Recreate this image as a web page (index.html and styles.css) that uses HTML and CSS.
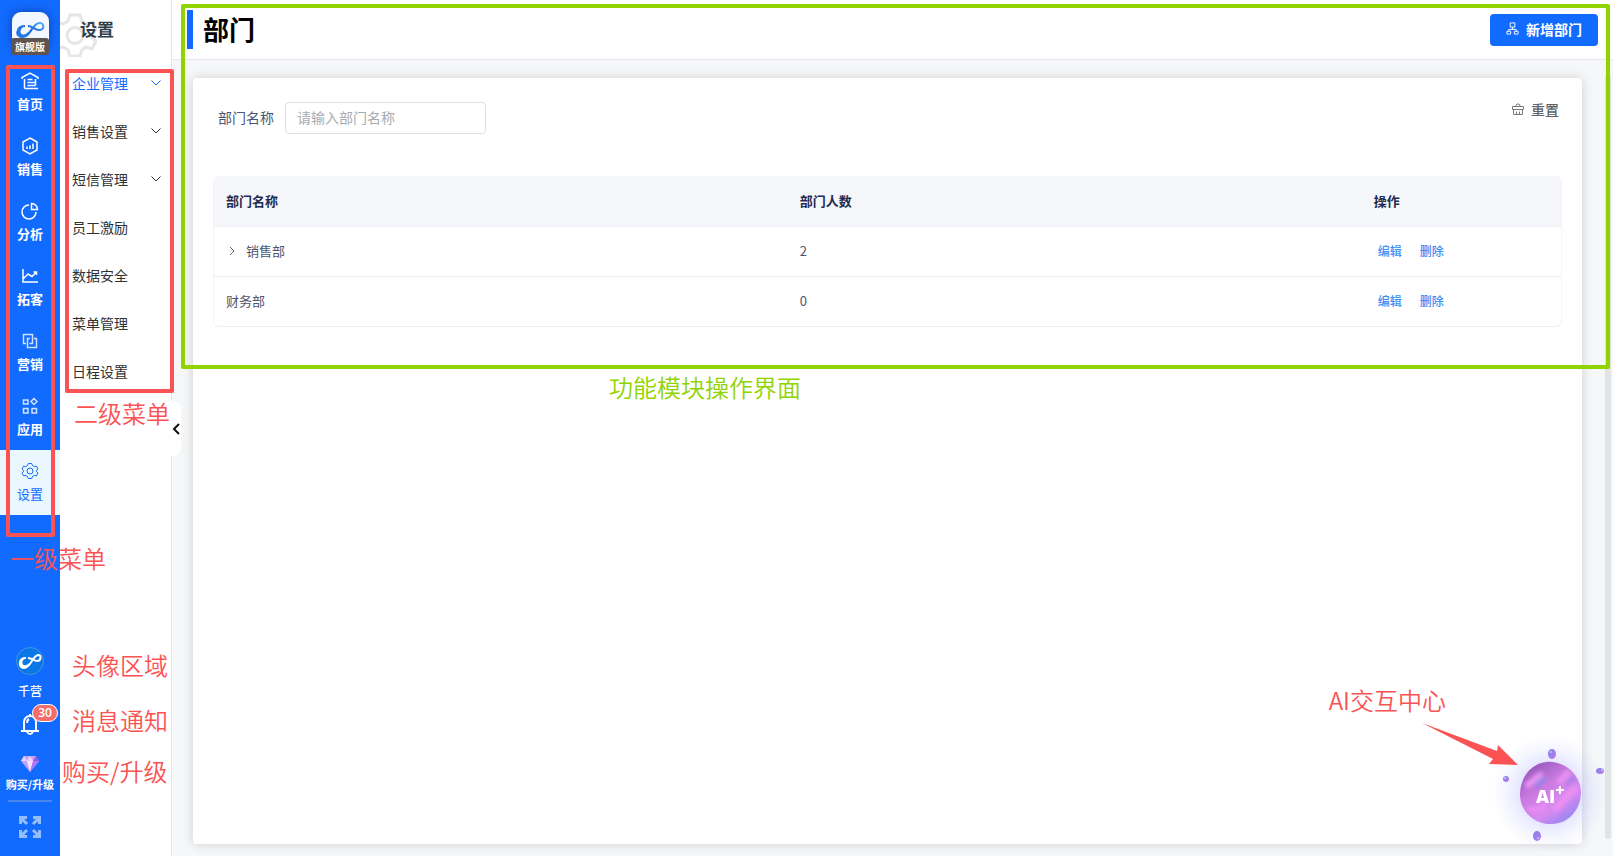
FILE: index.html
```html
<!DOCTYPE html>
<html lang="zh-CN">
<head>
    <meta charset="UTF-8">
    <meta name="viewport" content="width=device-width, initial-scale=1.0">
    <title>部门</title>
    <link rel="stylesheet" href="styles.css">
</head>
<body>

<div class="app">
    <!-- First level menu -->
    <aside class="sidebar">
        <div class="logo">
            <svg class="logo-mark" viewBox="0 0 37 37" width="37" height="37">
                <defs>
                    <linearGradient id="logoBlue" x1="0" y1="1" x2="1" y2="0">
                        <stop offset="0" stop-color="#3b9cf5"/>
                        <stop offset="0.5" stop-color="#1660d8"/>
                        <stop offset="1" stop-color="#5fb4fa"/>
                    </linearGradient>
                </defs>
                <path d="M13 14C4 14 3 25 10 25C18 26 20 12 27 11C32 10 33 17 28 18C23 19 21 14 16 14" fill="none" stroke="url(#logoBlue)" stroke-width="2"/>
                <path d="M12 14C4 16 3 24 8 25C13 26 16 22 18 19C14 23 11 24 9 22C7 20 8 16 12 14Z" fill="#2478e6" stroke="#2478e6"/>
            </svg>
            <span class="edition">旗舰版</span>
        </div>
        <nav class="main-nav">
            <a class="nav-item" href="#">
                <svg viewBox="0 0 18 18" width="18" height="18"><path d="M1 7V5.500L9 1L17 5.500V7M3.500 7V16.500M14.500 7V13.500M3.500 16.500H17M6.500 7.500H11.500M6.500 10.500H14M6.500 13.500H14.500"/></svg>
                首页
            </a>
            <a class="nav-item" href="#">
                <svg viewBox="0 0 18 18" width="18" height="18"><path d="M9 1L16 5V13L9 17L2 13V5ZM6 9.500V12M9 8.500V12M12 6.500V12"/></svg>
                销售
            </a>
            <a class="nav-item" href="#">
                <svg viewBox="0 0 18 18" width="18" height="18"><path d="M8 3A7 7 0 1 0 15 10M10.500 1.500V7.500H16.500A6 6 0 0 0 10.500 1.500Z"/></svg>
                分析
            </a>
            <a class="nav-item" href="#">
                <svg viewBox="0 0 18 18" width="18" height="18"><path d="M2 2V15H17M2 12L7 7L11 9.500L15 5.500M12.500 5H15.500V8"/></svg>
                拓客
            </a>
            <a class="nav-item soft" href="#">
                <svg viewBox="0 0 18 18" width="18" height="18"><path d="M5 11.500H2.500V2.500H11.500V11.500H8.500M13 6.500H15.500V15.500H6.500V6.500H9"/></svg>
                营销
            </a>
            <a class="nav-item soft" href="#">
                <svg viewBox="0 0 18 18" width="18" height="18"><path d="M2.500 3H7V7H2.500ZM2.500 11.500H7V16H2.500ZM11 11.500H15.500V16H11ZM13 1.500L16 4.500L13 7.500L10 4.500Z"/></svg>
                应用
            </a>
            <a class="nav-item active" href="#">
                <svg viewBox="0 0 18 18" width="18" height="18"><path d="M7.300 1.500H10.700L11.500 3.600L13.500 4.600L15.400 4.100L17 7L15.600 8.300V9.700L17 11L15.400 13.900L13.500 13.400L11.500 14.400L10.700 16.500H7.300L6.500 14.400L4.500 13.400L2.600 13.900L1 11L2.400 9.700V8.300L1 7L2.600 4.100L4.500 4.600L6.500 3.600Z"/><circle cx="9" cy="9" r="3"/></svg>
                设置
            </a>
        </nav>
        <div class="user-area">
            <a class="user" href="#">
                <svg viewBox="0 0 28 28" width="28" height="28">
                    <circle cx="14" cy="14" r="13.500" fill="#0877e8" stroke="#4b93d9"/>
                    <path d="M10 11C2 11 2 21 8 21C15 21 16 9 22 8C26 8 25 14 21 14C18 14 16 11 12 11" fill="none" stroke="#fff" stroke-width="2"/>
                    <path d="M9 11C2 13 2 21 8 21C11 21 13 18 14 16C11 19 8 19 7 18C5 16 6 13 9 11Z" fill="#fff" stroke="#fff"/>
                </svg>
                千营
            </a>
            <button class="bell" aria-label="消息通知">
                <svg viewBox="0 0 20 22" width="20" height="22"><path d="M4 18V9A6 6 0 0 1 16 9V18M1 18H19M7 19Q10 23 13 19M10 3V1M7 10Q7 7 9 6" fill="none" stroke="#fff" stroke-width="2"/></svg>
                <span class="badge">30</span>
            </button>
            <a class="upgrade" href="#">
                <svg viewBox="0 0 20 18" width="20" height="18">
                    <path d="M4 1H16L19 6L10 17L1 6Z" fill="#c5a2fb"/>
                    <path d="M4 1L7 6H1ZM10 1L13 6H7Z" fill="#e9d4ff"/>
                    <path d="M16 1L13 6H19Z" fill="#8f54e9"/>
                    <path d="M7 6H13L10 17Z" fill="#f4e3ff"/>
                    <path d="M13 6H19L10 17Z" fill="#b276f4"/>
                </svg>
                购买/升级
            </a>
            <button class="fullscreen" aria-label="全屏">
                <svg viewBox="0 0 22 22" width="22" height="22"><path d="M1.500 8V1.500H8M2 2L8 8M14 1.500H20.500V8M20 2L14 8M1.500 14V20.500H8M2 20L8 14M20.500 14V20.500H14M20 20L14 14" fill="none" stroke="#95bdfc" stroke-width="3"/></svg>
            </button>
        </div>
    </aside>

    <!-- Second level menu -->
    <aside class="submenu">
        <div class="submenu-title">
            <svg class="submenu-gear" viewBox="0 0 44 44" width="44" height="44"><path d="M17 2H27L29 8L34 11L40 9L43 17L38 21V24L43 28L39 36L33 34L29 37L27 43H17L15 37L10 34L4 36L0 28L5 24V21L0 17L4 9L10 11L15 8Z"/><circle cx="22" cy="22.500" r="8"/></svg>
            <span>设置</span>
        </div>
        <nav class="sub-nav">
            <a class="sub-item current" href="#">企业管理 <svg viewBox="0 0 10 6" width="10" height="6"><path d="M0.500 0.500L5 5L9.500 0.500"/></svg></a>
            <a class="sub-item" href="#">销售设置 <svg viewBox="0 0 10 6" width="10" height="6"><path d="M0.500 0.500L5 5L9.500 0.500"/></svg></a>
            <a class="sub-item" href="#">短信管理 <svg viewBox="0 0 10 6" width="10" height="6"><path d="M0.500 0.500L5 5L9.500 0.500"/></svg></a>
            <a class="sub-item" href="#">员工激励</a>
            <a class="sub-item" href="#">数据安全</a>
            <a class="sub-item" href="#">菜单管理</a>
            <a class="sub-item" href="#">日程设置</a>
        </nav>
        <button class="collapse" aria-label="收起">
            <svg viewBox="0 0 8 12" width="8" height="12"><path d="M7 1L2 6L7 11" fill="none" stroke="#111" stroke-width="2"/></svg>
        </button>
    </aside>

    <main class="main">
        <header class="page-header">
            <h1>部门</h1>
            <button class="add-btn">
                <svg viewBox="0 0 14 14" width="13" height="13"><path d="M4.500 1H9.500V5.500H4.500ZM7 5.500V8M3 10V8H11V10M1 10H5V13H1ZM9 10H13V13H9Z" fill="none" stroke="#fff"/></svg>
                新增部门
            </button>
        </header>
        <div class="content">
            <section class="card">
                <form class="filter">
                    <label for="deptName">部门名称</label>
                    <input type="text" id="deptName" placeholder="请输入部门名称">
                    <button type="reset" class="reset-btn">
                        <svg viewBox="0 0 14 14" width="14" height="14"><path d="M5 4.500V3Q7 0.500 9 3V4.500M1.500 4.500H12.500V7.500H1.500ZM2.500 7.500V12.500H11.500V7.500M5.500 9.500V12.500M8.500 9.500V12.500" fill="none" stroke="#777"/></svg>
                        重置
                    </button>
                </form>
                <div class="table-wrap">
                    <table>
                        <thead>
                            <tr>
                                <th class="col-name">部门名称</th>
                                <th class="col-count">部门人数</th>
                                <th>操作</th>
                            </tr>
                        </thead>
                        <tbody>
                            <tr>
                                <td><button class="expand" aria-label="展开"><svg viewBox="0 0 6 10" width="6" height="10"><path d="M1 1L5 5L1 9" fill="none" stroke="#606266"/></svg></button>销售部</td>
                                <td>2</td>
                                <td><a class="op" href="#">编辑</a><a class="op" href="#">删除</a></td>
                            </tr>
                            <tr>
                                <td>财务部</td>
                                <td>0</td>
                                <td><a class="op" href="#">编辑</a><a class="op" href="#">删除</a></td>
                            </tr>
                        </tbody>
                    </table>
                </div>
            </section>
        </div>
        <div class="scrollbar"></div>
    </main>
</div>

<button class="ai-orb" aria-label="AI交互中心">
    <svg viewBox="0 0 120 120" width="120" height="120">
        <defs>
            <linearGradient id="orb" x1="0.200" y1="0" x2="0.900" y2="1">
                <stop offset="0" stop-color="#9157b8"/>
                <stop offset="0.350" stop-color="#ca79df"/>
                <stop offset="0.650" stop-color="#d88af0"/>
                <stop offset="1" stop-color="#8584f2"/>
            </linearGradient>
            <radialGradient id="halo">
                <stop offset="0.400" stop-color="#a5a8ff" stop-opacity="0.400"/>
                <stop offset="1" stop-color="#c9d2ff" stop-opacity="0"/>
            </radialGradient>
            <linearGradient id="dot" x1="0" y1="0" x2="1" y2="1">
                <stop offset="0" stop-color="#7d84ee"/>
                <stop offset="1" stop-color="#c07be8"/>
            </linearGradient>
            <filter id="soft"><feGaussianBlur stdDeviation="2"/></filter>
            <clipPath id="orbClip"><circle cx="60" cy="60" r="30"/></clipPath>
        </defs>
        <circle cx="60" cy="60" r="58" fill="url(#halo)"/>
        <path d="M56 29C74 27 91 42 91 59C91 77 78 91 62 91C45 92 31 79 30 63C30 45 40 31 56 29Z" fill="url(#orb)"/>
        <g clip-path="url(#orbClip)" filter="url(#soft)" stroke-linecap="round">
            <path d="M38 52L50 42" stroke="#f097f6" stroke-width="6"/>
            <path d="M47 52L53 46" stroke="#9586e8" stroke-width="6"/>
            <path d="M66 76L84 56" stroke="#f08ff3" stroke-width="6"/>
            <path d="M70 48L78 40" stroke="#e995f4" stroke-width="6"/>
            <path d="M40 76Q48 80 54 72" fill="none" stroke="#e88df4" stroke-width="6"/>
            <path d="M78 50L86 43" stroke="#9e82ec" stroke-width="4"/>
        </g>
        <g fill="url(#dot)">
            <ellipse cx="62" cy="21" rx="4" ry="5"/>
            <ellipse cx="16" cy="46" rx="3" ry="3"/>
            <ellipse cx="110" cy="38" rx="4" ry="3"/>
            <ellipse cx="47" cy="103" rx="4" ry="5"/>
        </g>
        <g fill="#c9c6ff"><circle cx="61" cy="19" r="1"/><circle cx="15" cy="45" r="1"/><circle cx="112" cy="37" r="1"/><circle cx="48" cy="105" r="1"/></g>
    </svg>
    <span class="ai-text">AI<sup>+</sup></span>
</button>

<!-- Guide marks drawn over the interface -->
<div class="mark mark-first"></div>
<div class="mark mark-second"></div>
<div class="mark mark-module"></div>
<span class="note note-first">一级菜单</span>
<span class="note note-second">二级菜单</span>
<span class="note note-avatar">头像区域</span>
<span class="note note-message">消息通知</span>
<span class="note note-upgrade">购买/升级</span>
<span class="note note-module">功能模块操作界面</span>
<span class="note note-ai">AI交互中心</span>
<svg class="arrow" viewBox="0 0 96 44" width="96" height="44"><path d="M0 0L75 28L76 22L96 42L67 41L71 36Z" fill="#fb5353"/></svg>

</body>
</html>
```

FILE: styles.css
```css
* {
    box-sizing: border-box;
}
body {
    margin: 0;
    font-family: "Noto Sans CJK SC", sans-serif;
    font-size: 14px;
    color: #303133;
    background-color: #f5f7f9;
    overflow: hidden;
}
a {
    text-decoration: none;
    color: inherit;
}
button {
    border: none;
    background: none;
    padding: 0;
    font-family: inherit;
    cursor: pointer;
}
svg {
    display: block;
    flex-shrink: 0;
}
.app {
    display: flex;
    height: 100vh;
}

/* First level menu */
.sidebar {
    width: 60px;
    flex-shrink: 0;
    display: flex;
    flex-direction: column;
    background-color: #126bff;
    color: #fff;
}
.logo {
    position: relative;
    height: 60px;
    padding: 12px 12px 0;
}
.logo-mark {
    border-radius: 9px;
    background-color: #f3f7ff;
    box-shadow: 0 0 10px rgba(0, 30, 100, 0.5);
}
.edition {
    position: absolute;
    left: 11px;
    top: 38px;
    width: 38px;
    border-radius: 3px;
    background-color: #5d5350;
    font-size: 10px;
    font-weight: bold;
    line-height: 17px;
    text-align: center;
}
.nav-item {
    display: flex;
    flex-direction: column;
    align-items: center;
    gap: 4px;
    height: 65px;
    padding-top: 12px;
    font-size: 13px;
    font-weight: bold;
    line-height: 20px;
}
.nav-item svg,
.submenu-gear,
.sub-item svg {
    fill: none;
    stroke: currentColor;
}
.nav-item svg {
    stroke-width: 1.5;
}
.nav-item.active {
    background-color: #eaf7ff;
    color: #126bff;
    font-weight: normal;
}
.nav-item.active svg {
    stroke-width: 1;
}
.nav-item.soft svg {
    opacity: 0.8;
}
.user-area {
    display: flex;
    flex-direction: column;
    align-items: center;
    margin-top: auto;
    padding-bottom: 18px;
    font-size: 12px;
}
.user,
.upgrade {
    display: flex;
    flex-direction: column;
    align-items: center;
    line-height: 18px;
}
.user {
    gap: 7px;
    font-weight: 500;
}
.bell {
    position: relative;
    margin-top: 13px;
}
.badge {
    position: absolute;
    left: 12px;
    top: -9px;
    width: 26px;
    border: 1px solid #fff;
    border-radius: 9px;
    background-color: #f56c6c;
    color: #fff;
    font-family: "Open Sans", sans-serif;
    font-size: 12px;
    font-weight: 600;
    line-height: 16px;
}
.upgrade {
    gap: 2px;
    margin-top: 20px;
    font-size: 11px;
    font-weight: bold;
    white-space: nowrap;
}
.fullscreen {
    margin-top: 7px;
    padding: 14px 11px 0;
    border-top: 2px solid #4a86ea;
}

/* Second level menu */
.submenu {
    position: relative;
    width: 112px;
    flex-shrink: 0;
    border-right: 1px solid #e1e4ec;
    background-color: #fff;
}
.submenu-title {
    display: flex;
    align-items: center;
    height: 60px;
    padding: 0 0 4px 20px;
    overflow: hidden;
    position: relative;
    color: #303e4c;
    font-size: 17px;
    font-weight: bold;
}
.submenu-title span {
    position: relative;
}
.submenu-gear {
    position: absolute;
    left: -7px;
    top: 13px;
    color: #e6e6e6;
    stroke-width: 3;
}
.sub-item {
    display: flex;
    align-items: center;
    justify-content: space-between;
    height: 48px;
    padding: 0 10px 2px 12px;
}
.sub-item.current {
    color: #126bff;
}
.collapse {
    position: absolute;
    z-index: 1;
    right: -10px;
    top: 401px;
    width: 11px;
    height: 55px;
    padding-left: 2px;
    border-radius: 0 8px 8px 0;
    background-color: #fff;
}

/* Page */
.main {
    position: relative;
    flex: 1;
    min-width: 0;
    display: flex;
    flex-direction: column;
}
.page-header {
    display: flex;
    align-items: center;
    justify-content: space-between;
    height: 60px;
    padding: 0 15px;
    border-bottom: 1px solid #e4e7ed;
    background-color: #fff;
}
h1 {
    margin: 0;
    padding: 0 0 2px 10px;
    border-left: 6px solid #126bff;
    color: #000;
    font-size: 26px;
    font-weight: bold;
    line-height: 37px;
}
.add-btn {
    display: flex;
    align-items: center;
    gap: 7px;
    height: 32px;
    padding: 0 16px 2px;
    border-radius: 4px;
    background-color: #126bff;
    color: #fff;
    font-size: 14px;
    font-weight: bold;
}
.content {
    flex: 1;
    display: flex;
    padding: 18px 31px 12px 21px;
}
.card {
    flex: 1;
    padding: 24px 20px;
    border-radius: 4px;
    background-color: #fff;
    box-shadow: 0 0 12px rgba(0, 0, 0, 0.16);
}
.filter {
    display: flex;
    align-items: center;
    gap: 11px;
    margin-bottom: 42px;
    padding: 0 3px 0 5px;
    color: #4c5672;
}
.filter label {
    padding-bottom: 2px;
}
.filter input {
    width: 201px;
    height: 32px;
    padding: 0 11px 2px;
    border: 1px solid #dcdfe6;
    border-radius: 4px;
    font-family: inherit;
    font-size: 14px;
}
.filter input::placeholder {
    color: #a8abb2;
}
.reset-btn {
    display: flex;
    align-items: center;
    align-self: flex-start;
    gap: 6px;
    margin-left: auto;
    color: #606266;
    font-size: 14px;
    font-weight: 500;
    line-height: 8px;
}
.table-wrap {
    overflow: hidden;
    border: 1px solid #f2f4f9;
    border-bottom: 1px solid #ebeef5;
    border-top: none;
    border-radius: 6px;
}
table {
    width: 100%;
    border-collapse: separate;
    border-spacing: 0;
    table-layout: fixed;
    color: #4c5672;
    font-size: 13px;
}
th,
td {
    height: 50px;
    padding: 0 12px 2px;
    text-align: left;
}
tbody tr:last-child td {
    height: 49px;
}
th {
    height: 51px;
    background-color: #f5f7fb;
    color: #1f2c50;
    font-weight: bold;
}
th,
tbody tr:first-child td {
    border-bottom: 1px solid #ebeef5;
}
.col-name,
.col-count {
    width: 42.6%;
}
.expand {
    width: 20px;
    padding-left: 3px;
}
.op {
    margin: 0 14px 0 4px;
    color: #3d8bf5;
    font-size: 12px;
    font-weight: 500;
}
.scrollbar {
    position: absolute;
    top: 74px;
    right: 2px;
    bottom: 17px;
    width: 6px;
    border-radius: 3px;
    background-color: #e2e3e5;
}

/* Floating assistant */
.ai-orb {
    position: fixed;
    right: 3px;
    bottom: 3px;
    width: 120px;
    height: 120px;
}
.ai-text {
    position: absolute;
    left: 46px;
    top: 45px;
    color: #fff;
    font-family: "Open Sans", sans-serif;
    font-size: 18px;
    font-weight: 800;
    line-height: 36px;
}
.ai-text sup {
    font-size: 16px;
    line-height: 0;
}

/* Guide marks */
.mark {
    position: absolute;
    border: 4px solid #fb5353;
    border-radius: 2px;
    pointer-events: none;
}
.mark-first {
    left: 6px;
    top: 65px;
    width: 49px;
    height: 472px;
}
.mark-second {
    left: 65px;
    top: 69px;
    width: 109px;
    height: 324px;
}
.mark-module {
    left: 181px;
    right: 3px;
    top: 4px;
    height: 365px;
    border-color: #8fd400;
}
.note {
    position: absolute;
    color: #fb5353;
    font-size: 24px;
    font-weight: 350;
    line-height: 34px;
    white-space: nowrap;
}
.note-first {
    left: 10px;
    top: 541px;
}
.note-second {
    left: 74px;
    top: 396px;
}
.note-avatar {
    left: 72px;
    top: 648px;
}
.note-message {
    left: 72px;
    top: 703px;
}
.note-upgrade {
    left: 62px;
    top: 754px;
}
.note-module {
    left: 609px;
    top: 370px;
    color: #8fd400;
}
.note-ai {
    right: 167px;
    top: 683px;
}
.arrow {
    position: absolute;
    right: 95px;
    top: 723px;
}
```
